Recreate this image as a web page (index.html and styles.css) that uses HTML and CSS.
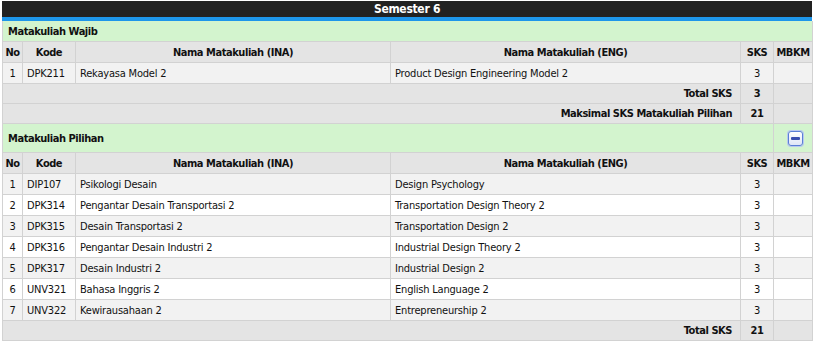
FILE: index.html
```html
<!DOCTYPE html>
<html>
<head>
<meta charset="utf-8">
<link rel="stylesheet" href="styles.css">
</head>
<body>
<div class="wrap">
  <div class="sem-title">Semester 6</div>
  <table class="krs">
    <colgroup>
      <col class="c-no"><col class="c-kode"><col class="c-ina"><col class="c-eng"><col class="c-sks"><col class="c-mbkm">
    </colgroup>
    <tr class="group"><td colspan="6">Matakuliah Wajib</td></tr>
    <tr class="head"><th>No</th><th>Kode</th><th>Nama Matakuliah (INA)</th><th>Nama Matakuliah (ENG)</th><th>SKS</th><th>MBKM</th></tr>
    <tr class="odd"><td class="num">1</td><td>DPK211</td><td>Rekayasa Model 2</td><td>Product Design Engineering Model 2</td><td class="num">3</td><td></td></tr>
    <tr class="total"><td colspan="4" class="lbl">Total SKS</td><td class="num">3</td><td></td></tr>
    <tr class="total"><td colspan="4" class="lbl">Maksimal SKS Matakuliah Pilihan</td><td class="num">21</td><td></td></tr>
    <tr class="group tall"><td colspan="5">Matakuliah Pilihan</td><td class="icon-cell"><span class="collapse-btn"><span class="bar"></span></span></td></tr>
    <tr class="head"><th>No</th><th>Kode</th><th>Nama Matakuliah (INA)</th><th>Nama Matakuliah (ENG)</th><th>SKS</th><th>MBKM</th></tr>
    <tr class="odd"><td class="num">1</td><td>DIP107</td><td>Psikologi Desain</td><td>Design Psychology</td><td class="num">3</td><td></td></tr>
    <tr class="even"><td class="num">2</td><td>DPK314</td><td>Pengantar Desain Transportasi 2</td><td>Transportation Design Theory 2</td><td class="num">3</td><td></td></tr>
    <tr class="odd"><td class="num">3</td><td>DPK315</td><td>Desain Transportasi 2</td><td>Transportation Design 2</td><td class="num">3</td><td></td></tr>
    <tr class="even"><td class="num">4</td><td>DPK316</td><td>Pengantar Desain Industri 2</td><td>Industrial Design Theory 2</td><td class="num">3</td><td></td></tr>
    <tr class="odd"><td class="num">5</td><td>DPK317</td><td>Desain Industri 2</td><td>Industrial Design 2</td><td class="num">3</td><td></td></tr>
    <tr class="even"><td class="num">6</td><td>UNV321</td><td>Bahasa Inggris 2</td><td>English Language 2</td><td class="num">3</td><td></td></tr>
    <tr class="odd"><td class="num">7</td><td>UNV322</td><td>Kewirausahaan 2</td><td>Entrepreneurship 2</td><td class="num">3</td><td></td></tr>
    <tr class="total"><td colspan="4" class="lbl">Total SKS</td><td class="num">21</td><td></td></tr>
  </table>
</div>
</body>
</html>
```

FILE: styles.css
```css
html, body {
  margin: 0;
  padding: 0;
  background: #fff;
}
.wrap {
  padding: 1px 1px 0 2px;
  width: 810px;
  font-family: "DejaVu Sans Condensed", "DejaVu Sans", sans-serif;
  font-size: 11px;
  letter-spacing: -0.2px;
  color: #111;
}
.sem-title {
  background: #222222;
  color: #fff;
  font-weight: bold;
  font-size: 12px;
  letter-spacing: -0.3px;
  text-align: center;
  height: 16px;
  line-height: 16px;
  border-bottom: 4px solid #1e96ea;
}
.krs {
  width: 810px;
  border-collapse: collapse;
  table-layout: fixed;
}
.c-no { width: 20px; }
.c-kode { width: 53px; }
.c-ina { width: 315px; }
.c-eng { width: 350px; }
.c-sks { width: 33px; }
.c-mbkm { width: 39px; }
.krs td, .krs th {
  border: 1px solid #d2d2d2;
  padding: 0 4px;
  height: 20px;
  line-height: 13px;
  text-align: left;
  white-space: nowrap;
  overflow: hidden;
}
.krs th {
  background: #e4e4e4;
  font-weight: bold;
  letter-spacing: -0.45px;
  text-align: center;
  padding: 0 2px;
}
.krs tr.group td {
  background: #d3f4ce;
  font-weight: bold;
  letter-spacing: -0.45px;
  padding-left: 5px;
}
.krs tr.group:first-child td {
  border-top: none;
}
.krs tr.tall td {
  height: 28px;
}
.krs tr.odd td { background: #f2f2f2; }
.krs tr.even td { background: #ffffff; }
.krs tr.total td {
  background: #e4e4e4;
  font-weight: bold;
  letter-spacing: -0.45px;
  height: 19px;
}
.krs td.num {
  text-align: center;
  padding: 0 2px;
}
.krs td.lbl {
  text-align: right;
  padding-right: 8px;
}
.krs td.icon-cell {
  text-align: center;
  padding: 0;
}
.collapse-btn {
  display: inline-flex;
  align-items: center;
  justify-content: center;
  width: 13px;
  height: 13px;
  border: 1px solid #5a7fd6;
  border-radius: 3px;
  background: linear-gradient(#ffffff, #dfe6f7);
  vertical-align: middle;
  box-shadow: 0 0 0 1px #b8c8ef;
}
.collapse-btn .bar {
  width: 9px;
  height: 3px;
  background: #3a4fb0;
  border-radius: 1px;
}
```
